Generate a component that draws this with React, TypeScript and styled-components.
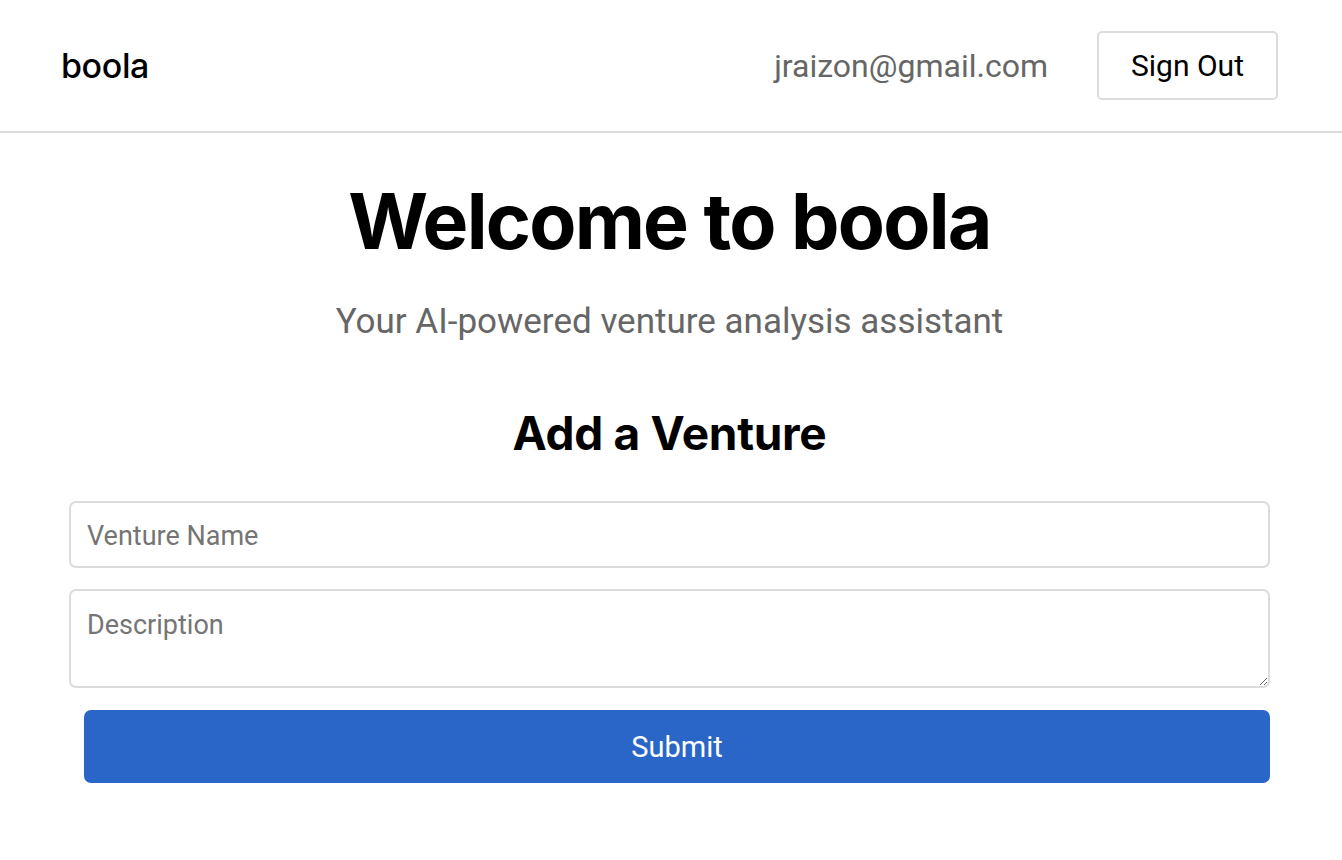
import React from "react";
import styled, { createGlobalStyle } from "styled-components";

const Global = createGlobalStyle`
  html, body { margin: 0; padding: 0; background: #fff; }
  body { font-family: Roboto, "Liberation Sans", sans-serif; }
  * { box-sizing: border-box; }
`;

const Header = styled.header`
  height: 133px;
  display: flex;
  align-items: center;
  justify-content: space-between;
  padding: 0 64px 0 61px;
  border-bottom: 2px solid #dcdcdc;
`;

const Logo = styled.div`
  font-family: Inter, sans-serif;
  font-size: 34px;
  font-weight: 500;
  color: #000;
  letter-spacing: -0.4px;
`;

const Right = styled.div`
  display: flex;
  align-items: center;
  gap: 49px;
`;

const Email = styled.span`
  font-family: Roboto, sans-serif;
  font-size: 32px;
  color: #666;
`;

const OutlineButton = styled.button`
  width: 181px;
  height: 69px;
  border: 2px solid #dcdcdc;
  border-radius: 5px;
  background: #fff;
  font-family: Roboto, sans-serif;
  font-size: 30px;
  color: #000;
`;

const Main = styled.main`
  display: flex;
  flex-direction: column;
  align-items: center;
  padding: 0 72px 0 69px;
`;

const Title = styled.h1`
  margin: 41px 0 0;
  font-family: Inter, sans-serif;
  font-weight: 700;
  font-size: 77px;
  line-height: 94px;
  letter-spacing: -1.8px;
  color: #000;
`;

const Subtitle = styled.p`
  margin: 34px 0 0;
  font-family: Roboto, sans-serif;
  font-size: 35px;
  line-height: 40px;
  color: #666;
`;

const SectionTitle = styled.h2`
  margin: 61px 0 0;
  font-family: Inter, sans-serif;
  font-weight: 700;
  font-size: 46px;
  line-height: 60px;
  letter-spacing: -0.3px;
  color: #000;
`;

const Form = styled.form`
  align-self: stretch;
  display: flex;
  flex-direction: column;
  margin-top: 38px;
`;

const Field = styled.input`
  width: 100%;
  height: 67px;
  border: 2px solid #dcdcdc;
  border-radius: 7px;
  padding: 3px 16px 0;
  font-family: Roboto, sans-serif;
  font-size: 27px;
  color: #000;
  outline: none;
  &::placeholder { color: #757575; }
`;

const Area = styled.textarea`
  display: block;
  width: 100%;
  height: 99px;
  margin-top: 21px;
  border: 2px solid #dcdcdc;
  border-radius: 7px;
  padding: 18px 16px;
  font-family: Roboto, sans-serif;
  font-size: 27px;
  line-height: 32px;
  outline: none;
  resize: vertical;
  &::placeholder { color: #757575; }
`;

const Submit = styled.button`
  margin: 22px 0 0 15px;
  width: calc(100% - 15px);
  height: 73px;
  border: none;
  border-radius: 7px;
  background: #2a66c7;
  color: #fff;
  font-family: Roboto, sans-serif;
  font-size: 29px;
`;

export default function App() {
  return (
    <>
      <Global />
      <Header>
        <Logo>boola</Logo>
        <Right>
          <Email>jraizon@gmail.com</Email>
          <OutlineButton type="button">Sign Out</OutlineButton>
        </Right>
      </Header>
      <Main>
        <Title>Welcome to boola</Title>
        <Subtitle>Your AI-powered venture analysis assistant</Subtitle>
        <SectionTitle>Add a Venture</SectionTitle>
        <Form onSubmit={(e) => e.preventDefault()}>
          <Field placeholder="Venture Name" />
          <Area placeholder="Description" />
          <Submit type="submit">Submit</Submit>
        </Form>
      </Main>
    </>
  );
}
